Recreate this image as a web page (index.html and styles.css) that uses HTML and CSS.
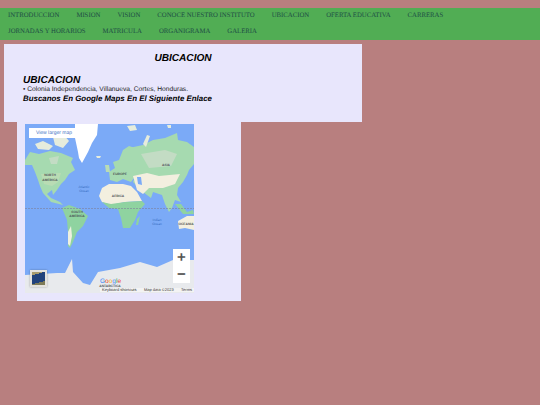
FILE: index.html
```html
<!DOCTYPE html>
<html lang="en">
<head>
    <meta charset="UTF-8">
    <meta name="viewport" content="width=device-width, initial-scale=1.0">
    <title>Ubicacion</title>
    <link rel="stylesheet" href="styles.css">
</head>
<body>
    <nav class="menu">
        <a href="#">INTRODUCCION</a>
        <a href="#">MISION</a>
        <a href="#">VISION</a>
        <a href="#">CONOCE NUESTRO INSTITUTO</a>
        <a href="#">UBICACION</a>
        <a href="#">OFERTA EDUCATIVA</a>
        <a href="#">CARRERAS</a>
        <a href="#">JORNADAS Y HORARIOS</a>
        <a href="#">MATRICULA</a>
        <a href="#">ORGANIGRAMA</a>
        <a href="#">GALERIA</a>
    </nav>

    <section class="info">
        <h1>UBICACION</h1>
        <h2>UBICACION</h2>
        <p>• Colonia Independencia, Villanueva, Cortes, Honduras.</p>
        <h3>Buscanos En Google Maps En El Siguiente Enlace</h3>
    </section>

    <section class="map-box">
        <div class="map">
            <svg class="map-art" viewBox="0 0 169 169" width="169" height="169">
                <rect width="169" height="169" fill="#7baaf7"/>
                <!-- north america -->
                <path fill="#a6dab0" d="M0 36 L5 28 L14 30 L25 27 L36 29 L48 34 L46 38 L50 46 L44 50 L40 56 L36 60 L32 66 L28 71 L27 66 L22 70 L26 74 L35 78 L38 81 L34 80 L26 78 L18 69 L15 62 L13 56 L10 48 L7 41 L0 41 Z"/>
                <path fill="#c3dcc4" d="M24 34 L34 32 L32 40 L26 40 Z"/>
                <path fill="#b9dcb4" d="M16 50 L36 49 L33 58 L27 62 L19 60 Z"/>
                <path fill="#e6ecdc" d="M10 20 L18 17 L28 22 L24 26 L13 25 Z M28 13 L38 10 L44 17 L38 24 L30 21 Z"/>
                <!-- greenland -->
                <path fill="#fff" d="M50 0 L73 0 L72 11 L67 19 L63 28 L57 39 L54 34 L53 28 L50 14 Z"/>
                <path fill="#e6ecdc" d="M71 32 L76 32 L75 34 L72 34 Z"/>
                <!-- south america -->
                <path fill="#8fd3a0" d="M37 84 L44 81 L55 85 L63 92 L58 102 L52 108 L48 118 L45 124 L43 122 L43 108 L42 96 Z"/>
                <path fill="#eef0df" d="M43 108 L46 102 L47 112 L45 122 L43 120 Z"/>
                <!-- europe -->
                <path fill="#a6dab0" d="M85 56 L84 48 L90 44 L88 38 L94 36 L98 26 L104 22 L110 24 L114 34 L112 50 L106 58 L98 55 L92 58 Z"/>
                <path fill="#b9dcb4" d="M80 41 L84 41 L85 48 L81 48 Z"/>
                <path fill="#e6ecdc" d="M102 2 L110 1 L112 6 L105 7 Z"/>
                <!-- africa -->
                <path fill="#f3efdf" d="M77 64 L84 60 L98 60 L106 62 L112 68 L117 77 L100 78 L86 81 L77 78 L74 72 Z"/>
                <path fill="#8fd3a0" d="M77 78 L86 80 L100 78 L117 77 L120 80 L113 88 L110 96 L105 104 L98 104 L96 94 L93 85 L84 84 Z"/>
                <path fill="#8fd3a0" d="M112 95 L115 92 L113 101 L111 101 Z"/>
                <!-- asia -->
                <path fill="#a6dab0" d="M104 24 L118 21 L128 16 L140 14 L152 9 L153 16 L162 18 L169 23 L169 40 L164 46 L162 51 L158 58 L153 64 L152 71 L156 78 L150 76 L147 84 L144 88 L140 80 L137 71 L128 68 L126 74 L118 68 L112 62 L108 58 L112 48 Z"/>
                <path fill="#c3dcc4" d="M116 30 L140 26 L152 30 L146 42 L124 44 Z"/>
                <path fill="#f3efdf" d="M108 52 L122 49 L134 52 L155 50 L150 60 L138 64 L124 64 L118 70 L112 66 Z"/>
                <path fill="#7baaf7" d="M112 53 L116 53 L117 61 L113 60 Z"/>
                <path fill="#e6ecdc" d="M118 20 L122 11 L125 12 L121 23 Z"/>
                <path fill="#e6ecdc" d="M142 1 L146 1 L146 4 L143 4 Z"/>
                <path fill="#8fd3a0" d="M150 80 L156 80 L162 88 L168 86 L169 90 L158 90 Z"/>
                <!-- australia -->
                <path fill="#f3efdf" d="M153 97 L162 92 L169 92 L169 106 L160 104 L154 105 Z"/>
                <!-- antarctica -->
                <path fill="#e8eaed" d="M0 151 L32 149 L40 149 L47 135 L48 148 L58 159 L65 161 L73 148 L95 144 L115 138 L132 143 L148 136 L169 136 L169 169 L0 169 Z"/>
                <line class="equator" x1="0" y1="84.500" x2="169" y2="84.500"/>
                <g class="land-label">
                    <text x="25" y="52" text-anchor="middle">NORTH</text>
                    <text x="25" y="56.500" text-anchor="middle">AMERICA</text>
                    <text x="95" y="51" text-anchor="middle">EUROPE</text>
                    <text x="93" y="73" text-anchor="middle">AFRICA</text>
                    <text x="141" y="42" text-anchor="middle">ASIA</text>
                    <text x="52" y="89" text-anchor="middle">SOUTH</text>
                    <text x="52" y="93" text-anchor="middle">AMERICA</text>
                    <text x="161" y="100.500" text-anchor="middle">OCEANIA</text>
                    <text x="85" y="163" text-anchor="middle">ANTARCTICA</text>
                </g>
                <g class="sea-label">
                    <text x="59" y="64" text-anchor="middle">Atlantic</text>
                    <text x="59" y="68" text-anchor="middle">Ocean</text>
                    <text x="132" y="97" text-anchor="middle">Indian</text>
                    <text x="132" y="101" text-anchor="middle">Ocean</text>
                </g>
            </svg>
            <a class="larger" href="#">View larger map</a>
            <div class="thumb"></div>
            <div class="zoom-btns">
                <span>+</span>
                <span>−</span>
            </div>
            <div class="google">
                <i class="g-blue">G</i><i class="g-red">o</i><i class="g-yellow">o</i><i class="g-blue">g</i><i class="g-green">l</i><i class="g-red">e</i>
            </div>
            <div class="credits">
                <span>Keyboard shortcuts</span>
                <span>Map data ©2023</span>
                <span>Terms</span>
            </div>
        </div>
    </section>
</body>
</html>
```

FILE: styles.css
```css
body {
    margin: 0;
    padding-top: 8px;
    background-color: #b87f7f;
    font-family: "Liberation Sans", Arial, sans-serif;
    color: #000;
    text-rendering: geometricPrecision;
}
.menu {
    display: flex;
    flex-wrap: wrap;
    column-gap: 17px;
    padding: 0 8px;
    background-color: #51ad54;
}
.menu a {
    font-family: "Liberation Serif", "Times New Roman", serif;
    font-size: 6.750px;
    line-height: 16px;
    color: #1d4c45;
    text-decoration: none;
}
.info {
    width: 339px;
    height: 78px;
    margin: 4px 0 0 4px;
    padding-left: 19px;
    background-color: #e8e6fc;
}
h1, h2, h3 {
    margin: 0;
    font-style: italic;
    font-weight: bold;
}
h1 {
    margin-left: -19px;
    padding-top: 9px;
    font-size: 10.100px;
    line-height: 12px;
    text-align: center;
}
h2 {
    margin-top: 9px;
    padding-top: 1px;
    font-size: 10.100px;
    line-height: 11px;
}
.info p {
    margin: 0;
    font-size: 6.700px;
    line-height: 8px;
    color: #222;
}
h3 {
    font-size: 7.900px;
    line-height: 10px;
}
.map-box {
    width: 216px;
    height: 177px;
    margin-left: 17px;
    padding: 2px 0 0 8px;
    background-color: #e8e6fc;
}
.map {
    position: relative;
    width: 169px;
    height: 169px;
    overflow: hidden;
}
.map-art {
    display: block;
}
.equator {
    stroke: #7d7f9a;
    stroke-width: 0.6;
    stroke-dasharray: 2 1;
}
.land-label text {
    font-size: 3.300px;
    fill: #4d5156;
    font-weight: bold;
}
.sea-label text {
    font-size: 3.300px;
    fill: #3a6fc4;
}
.larger {
    position: absolute;
    top: 4px;
    left: 4px;
    width: 50px;
    height: 10px;
    background-color: #fff;
    color: #3f73c4;
    font-size: 5px;
    line-height: 10px;
    text-align: center;
    text-decoration: none;
}
.thumb {
    position: absolute;
    left: 5px;
    top: 146px;
    width: 13px;
    height: 13px;
    border: 2px solid #e4e2de;
    box-shadow: 0 0 2px rgba(0,0,0,0.3);
    background: linear-gradient(165deg, #a79a6c 0 20%, #21427c 20% 75%, #7d7a58 75% 100%);
}
.zoom-btns {
    position: absolute;
    left: 148px;
    top: 125px;
    width: 17px;
    height: 34px;
    display: flex;
    flex-direction: column;
    background-color: #fff;
}
.zoom-btns span {
    flex: 1;
    text-align: center;
    font-size: 15px;
    line-height: 17px;
    font-weight: bold;
    color: #555;
}
.google {
    position: absolute;
    left: 75px;
    top: 154px;
    font-size: 6.500px;
    line-height: 7px;
}
.google i {
    font-style: normal;
}
.g-blue { color: #4285f4; }
.g-red { color: #ea4335; }
.g-yellow { color: #fbbc05; }
.g-green { color: #34a853; }
.credits {
    position: absolute;
    right: 0;
    bottom: 1px;
    display: flex;
    gap: 7.500px;
    padding: 0 2px;
    height: 4px;
    background-color: #f3f3f3;
    font-size: 4px;
    line-height: 4px;
    color: #333;
}
```
